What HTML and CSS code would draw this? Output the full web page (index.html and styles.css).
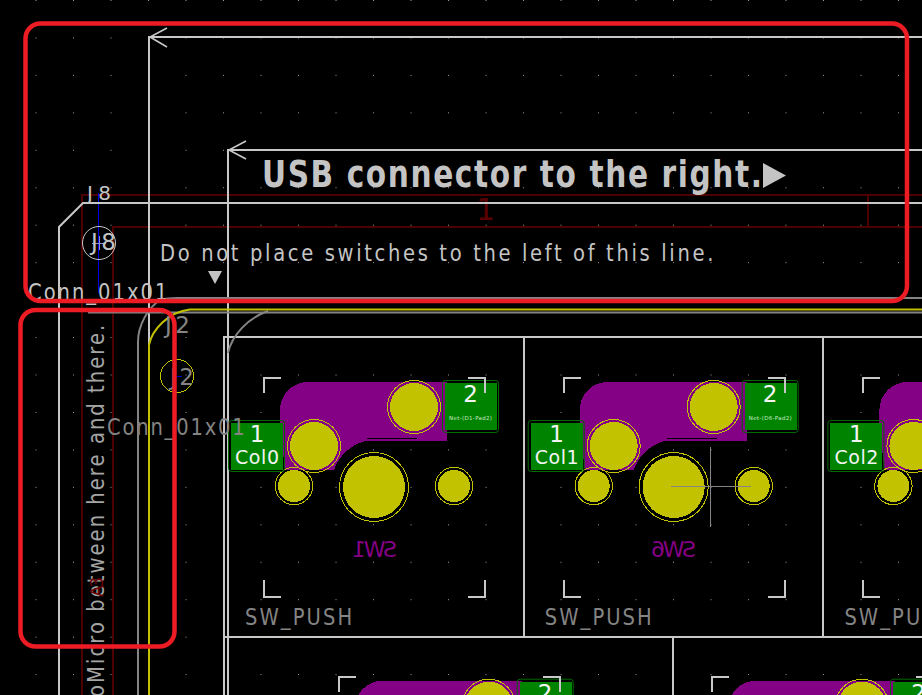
FILE: index.html
```html
<!DOCTYPE html>
<html lang="en">
<head>
<meta charset="utf-8">
<title>PCB layout</title>
<link rel="stylesheet" href="styles.css">
</head>
<body>
<svg class="board" width="922" height="695" viewBox="0 0 922 695" xmlns="http://www.w3.org/2000/svg">
  <defs>
    <pattern id="grid" patternUnits="userSpaceOnUse" width="37.5" height="37.45">
      <rect class="dot" x="36" y="0" width="1" height="1"/>
    </pattern>
    <g id="key">
      <path class="copper-back" d="M285 470 L280 425 V410 A28 28 0 0 1 308 382 H447 V441 H365 A46 46 0 0 0 334 470 Z"/>
      <path class="slot" d="M367 438.500 H417"/>
      <circle class="hole" cx="414" cy="407" r="24"/><circle class="ring" cx="414" cy="407" r="26.500"/>
      <circle class="hole" cx="314" cy="446" r="24"/><circle class="ring" cx="314" cy="446" r="26.500"/>
      <circle class="hole" cx="374" cy="487" r="31"/><circle class="ring" cx="374" cy="487" r="34.500"/>
      <circle class="hole" cx="294" cy="486" r="16"/><circle class="ring" cx="294" cy="486" r="18.700"/>
      <circle class="hole" cx="454" cy="486" r="16"/><circle class="ring" cx="454" cy="486" r="18.700"/>
      <rect class="pad" x="231" y="423" width="52" height="47"/>
      <rect class="pad-edge" x="228.500" y="420.500" width="56" height="51" rx="3"/>
      <rect class="pad" x="445" y="383" width="52" height="47"/>
      <rect class="pad-edge" x="442.500" y="380.500" width="56" height="52" rx="3"/>
      <path class="fab" d="M264 393 V378 H281 M468 378 H485 V393 M264 580 V596.500 H281 M468 596.500 H485 V580"/>
      <text class="t-ref" transform="translate(245 625) scale(.85 1)" textLength="126">SW_PUSH</text>
      <text class="t-padnum" x="257" y="442" text-anchor="middle">1</text>
      <text class="t-padnum" x="470.500" y="402" text-anchor="middle">2</text>
    </g>
  </defs>

  <rect class="canvas" width="922" height="695"/>
  <rect width="922" height="695" fill="url(#grid)"/>

  <!-- courtyard and outline traces -->
  <path class="dark-line" d="M82 695 V195 H922 M113 695 V226.500 H922 M868 195 V226"/>
  <text class="t-darkref" x="485.500" y="220" text-anchor="middle">1</text>
  <path class="blue-line" d="M98.500 193 V293"/>
  <path class="cross" d="M92 243 H106 M99 236 V250"/>
  <path class="edge-soft" d="M59 695 V227 L83 203 H922"/>
  <circle class="thin-circle" cx="99" cy="243" r="16.500"/>
  <path class="edge" d="M149 347 V37 H922"/>
  <path class="edge" d="M228 695 V150 H922"/>
  <path class="edge" d="M224 695 V337 H922"/>
  <path class="edge" d="M524 337 V636 M823 337 V636 M225 636.500 H922 M673 636 V695"/>
  <path class="arrow" d="M167 28 L150 37 L167 47"/>
  <path class="arrow" d="M246 141 L229 150 L246 159"/>
  <path class="trace-grey" d="M138 695 V342 C138 325 148 308 160 300 Q166 298 178 298 H922"/>
  <path class="trace-grey" d="M88 312.500 H922"/>
  <path class="trace-grey" d="M228 353 C232 335 248 318 268 311"/>
  <path class="trace-yellow" d="M149 695 V345 C152 330 168 312 190 309.500 H922"/>

  <!-- keys -->
  <use href="#key"/>
  <use href="#key" x="299.700"/>
  <use href="#key" x="599.400"/>
  <use href="#key" x="74.700" y="298.700"/>
  <use href="#key" x="448" y="298.700"/>

  <text class="t-pad" x="235" y="464" textLength="44">Col0</text>
  <text class="t-pad" x="534.700" y="464" textLength="44">Col1</text>
  <text class="t-pad" x="834.400" y="464" textLength="44">Col2</text>
  <text class="t-net" x="449" y="419.500" textLength="43">Net-(D1-Pad2)</text>
  <text class="t-net" x="748.700" y="419.500" textLength="43">Net-(D6-Pad2)</text>
  <text class="t-mirror" transform="translate(397 556.500) scale(-1 1)" textLength="45">SW1</text>
  <text class="t-mirror" transform="translate(696 556.500) scale(-1 1)" textLength="45">SW6</text>

  <path class="crosshair" d="M670.500 486.500 H751 M710.500 447 V527"/>

  <!-- silkscreen notes -->
  <text class="t-title" transform="translate(262 187) scale(.78 1)" textLength="641">USB connector to the right.</text>
  <polygon class="mark" points="763,163 786,175.500 763,188"/>
  <text class="t-note" transform="translate(160 261) scale(.85 1)" textLength="651">Do not place switches to the left of this line.</text>
  <polygon class="mark" points="208,271 222,271 215,284"/>
  <text class="t-note-v" transform="translate(103.500 697) rotate(-90) scale(.85 1)" textLength="438">oMicro between here and there.</text>
  <text class="t-dark-small" transform="translate(103 597) rotate(-90)" textLength="20">A3</text>

  <!-- connectors -->
  <text class="t-label" x="87" y="200" textLength="24">J8</text>
  <text class="t-label-lg" x="91" y="250" textLength="25">J8</text>
  <text class="t-label-lg" transform="translate(28 300) scale(.85 1)" textLength="164">Conn_01x01</text>
  <circle class="yellow-circle" cx="177" cy="376" r="16.500"/>
  <path class="blue-tick" d="M172 376.500 H182"/>
  <text class="t-grey" x="165" y="333" textLength="25">J2</text>
  <text class="t-grey" x="170" y="385" textLength="24">J2</text>
  <text class="t-grey" transform="translate(107 435) scale(.85 1)" textLength="162">Conn_01x01</text>

  <!-- annotation frames -->
  <rect class="frame" x="25.500" y="23.500" width="881.500" height="277.500" rx="15"/>
  <rect class="frame" x="20.500" y="310" width="154" height="336.500" rx="15"/>
</svg>
</body>
</html>
```
FILE: styles.css
```css
html, body {
  margin: 0;
  padding: 0;
  background: #000;
}

.board {
  display: block;
}

.canvas {
  fill: #000;
}

.dot {
  fill: #a0a0a0;
  shape-rendering: crispEdges;
}

.dark-line {
  fill: none;
  stroke: #4e0000;
  stroke-width: 2;
  shape-rendering: crispEdges;
}

.blue-line {
  fill: none;
  stroke: #0000e6;
  stroke-width: 1;
  shape-rendering: crispEdges;
}

.blue-tick {
  fill: none;
  stroke: #0000c8;
  stroke-width: 1;
  shape-rendering: crispEdges;
}

.cross {
  fill: none;
  stroke: #8c8ccc;
  stroke-width: 1;
  shape-rendering: crispEdges;
}

.edge {
  fill: none;
  stroke: #c8c8c8;
  stroke-width: 2;
  shape-rendering: crispEdges;
}

.edge-soft {
  fill: none;
  stroke: #c8c8c8;
  stroke-width: 2;
}

.arrow {
  fill: none;
  stroke: #c8c8c8;
  stroke-width: 1.600;
}

.thin-circle {
  fill: none;
  stroke: #c8c8c8;
  stroke-width: 1;
}

.yellow-circle {
  fill: none;
  stroke: #c2c200;
  stroke-width: 1;
  shape-rendering: crispEdges;
}

.trace-grey {
  fill: none;
  stroke: #848484;
  stroke-width: 2;
}

.trace-yellow {
  fill: none;
  stroke: #c2c200;
  stroke-width: 2;
}

.copper-back {
  fill: #840084;
  shape-rendering: crispEdges;
}

.slot {
  fill: none;
  stroke: #000;
  stroke-width: 1;
  shape-rendering: crispEdges;
}

.hole {
  fill: #c2c200;
  shape-rendering: crispEdges;
}

.ring {
  fill: none;
  stroke: #c2c200;
  stroke-width: 1;
  shape-rendering: crispEdges;
}

.pad {
  fill: #008400;
  shape-rendering: crispEdges;
}

.pad-edge {
  fill: none;
  stroke: #006a00;
  stroke-width: 1;
}

.fab {
  fill: none;
  stroke: #c8c8c8;
  stroke-width: 2;
  shape-rendering: crispEdges;
}

.crosshair {
  fill: none;
  stroke: #848484;
  stroke-width: 1;
  shape-rendering: crispEdges;
}

.mark {
  fill: #c4c4c4;
}

.frame {
  fill: none;
  stroke: #ed1c24;
  stroke-width: 4.500;
}

.t-title,
.t-note,
.t-note-v,
.t-label,
.t-label-lg,
.t-grey,
.t-ref,
.t-dark-small,
.t-padnum,
.t-pad,
.t-net,
.t-mirror,
.t-darkref {
  font-family: "DejaVu Sans", sans-serif;
}

.t-title {
  font-size: 38px;
  font-weight: 700;
  fill: #c4c4c4;
}

.t-note {
  font-size: 23px;
  fill: #c4c4c4;
}

.t-note-v {
  font-size: 23px;
  fill: #a4a4a4;
}

.t-label {
  font-size: 20px;
  fill: #c4c4c4;
}

.t-label-lg {
  font-size: 23px;
  fill: #c4c4c4;
}

.t-grey {
  font-size: 23px;
  fill: #848484;
}

.t-ref {
  font-size: 23px;
  fill: #848484;
}

.t-padnum {
  font-size: 23px;
  fill: #f4f4f4;
}

.t-pad {
  font-size: 19px;
  fill: #f4f4f4;
}

.t-net {
  font-size: 5.500px;
  fill: #c8e8c8;
}

.t-mirror {
  font-size: 22px;
  fill: #840084;
}

.t-darkref {
  font-size: 30px;
  fill: #5a0000;
}

.t-dark-small {
  font-size: 17px;
  fill: #6a0000;
}
```
